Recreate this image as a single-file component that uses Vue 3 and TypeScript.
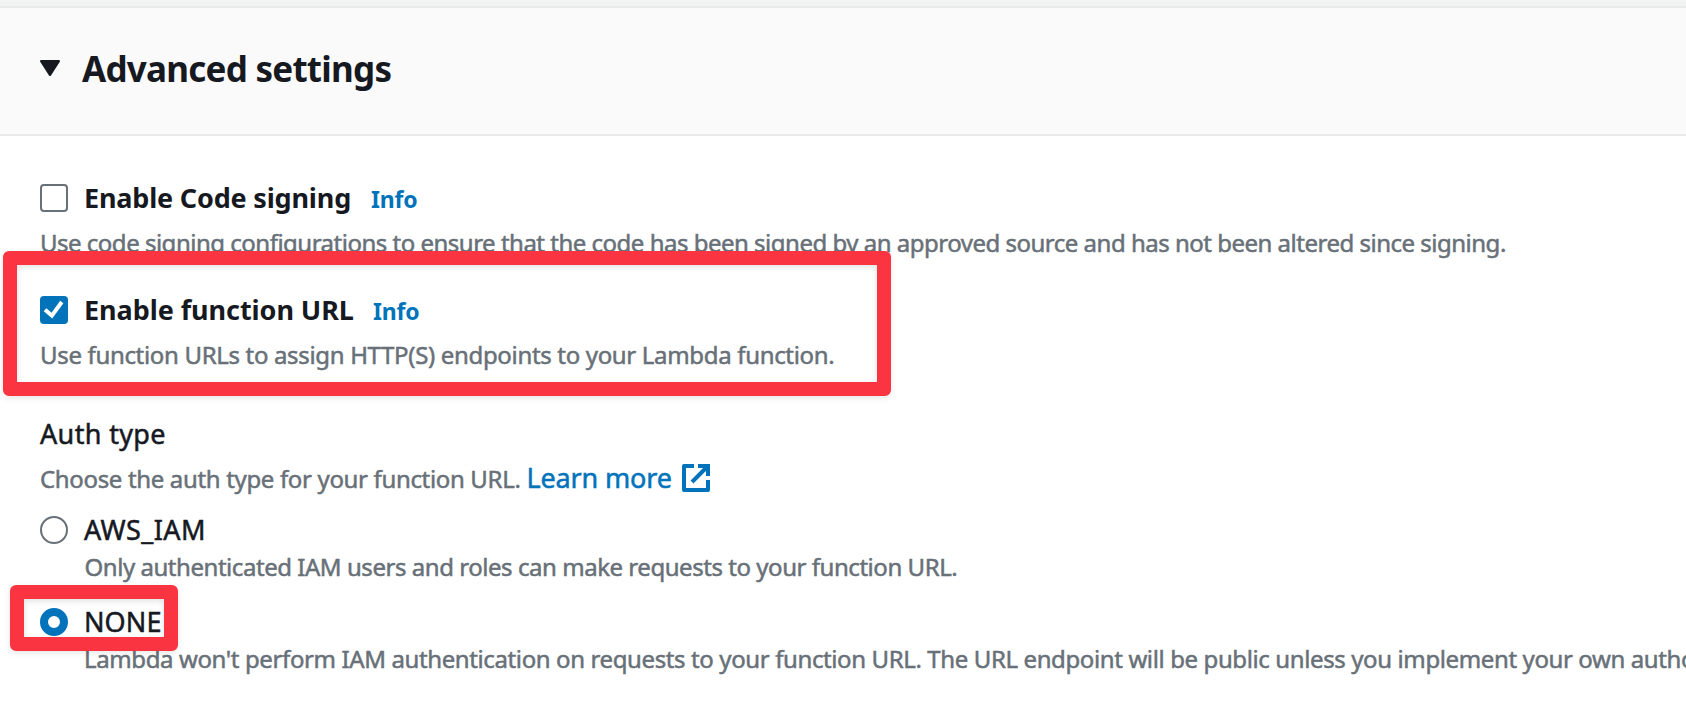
<script setup lang="ts">
import { ref } from 'vue'

type AuthType = 'AWS_IAM' | 'NONE'

const codeSigning = ref<boolean>(false)
const functionUrl = ref<boolean>(true)
const authType = ref<AuthType>('NONE')
</script>

<template>
  <main class="page">
    <div class="strip"></div>
    <header class="header">
      <svg class="caret" viewBox="0 0 20 16" width="20" height="16">
        <path d="M1.2 1.2H18.8L10 14.8Z" />
      </svg>
      <h2 class="title">Advanced settings</h2>
    </header>

    <section class="body">
      <div class="row option signing" @click="codeSigning = !codeSigning">
        <span class="box" :class="{ checked: codeSigning }"></span>
        <span class="label signing-label">Enable Code signing</span>
        <a class="info">Info</a>
      </div>
      <p class="row desc signing-desc">
        Use code signing configurations to ensure that the code has been signed by an approved source and has not been altered since signing.
      </p>

      <div class="row option url" @click="functionUrl = !functionUrl">
        <span class="box" :class="{ checked: functionUrl }">
          <svg v-if="functionUrl" viewBox="0 0 28 28" width="28" height="28">
            <path d="M5 13.8L11.9 19.6L21.8 6" />
          </svg>
        </span>
        <span class="label url-label">Enable function URL</span>
        <a class="info">Info</a>
      </div>
      <p class="row desc url-desc">Use function URLs to assign HTTP(S) endpoints to your Lambda function.</p>

      <div class="row auth">Auth type</div>
      <div class="row choose">
        <span class="desc choose-desc">Choose the auth type for your function URL.</span>
        <a class="learn">Learn more</a>
        <svg class="external" viewBox="0 0 28 28" width="28" height="28">
          <path d="M12 2H2V26H26V16" stroke-linejoin="round" />
          <path d="M16 2H26V12M10 18L25.5 2.5" />
        </svg>
      </div>

      <div class="row option iam" @click="authType = 'AWS_IAM'">
        <span class="radio" :class="{ selected: authType === 'AWS_IAM' }"></span>
        <span class="choice iam-label">AWS_IAM</span>
      </div>
      <p class="row desc iam-desc">Only authenticated IAM users and roles can make requests to your function URL.</p>

      <div class="row option none" @click="authType = 'NONE'">
        <span class="radio" :class="{ selected: authType === 'NONE' }"></span>
        <span class="choice none-label">NONE</span>
      </div>
      <p class="row desc none-desc">
        Lambda won't perform IAM authentication on requests to your function URL. The URL endpoint will be public unless you implement your own authorization logic
      </p>
    </section>

    <div class="highlight highlight-url"></div>
    <div class="highlight highlight-none"></div>
  </main>
</template>

<style>
body {
  margin: 0;
  overflow: hidden;
  background: #fff;
}
</style>

<style scoped>
.page {
  position: relative;
  width: 100%;
  height: 705px;
  overflow: hidden;
  background: #fff;
  color: #16191f;
  font-family: "Noto Sans", "Open Sans", sans-serif;
}
.strip {
  box-sizing: border-box;
  height: 8px;
  background: #f2f3f3;
  border-bottom: 2px solid #eaeaea;
}
.header {
  box-sizing: border-box;
  display: flex;
  height: 128px;
  padding: 43px 40px 0;
  background: #fafafa;
  border-bottom: 2px solid #eaeaea;
}
.caret {
  margin-top: 9px;
  fill: #16191f;
  stroke: #16191f;
  stroke-width: 2.4;
  stroke-linejoin: round;
}
.title {
  margin: 0 0 0 22px;
  font-size: 35px;
  line-height: 36px;
  font-weight: 700;
  letter-spacing: -0.75px;
}
.body {
  padding: 44px 0 0 40px;
}
.row {
  height: 36px;
  margin: 0;
  line-height: 36px;
  font-size: 27px;
  white-space: nowrap;
}
.option {
  display: flex;
  align-items: center;
}
.box,
.radio {
  box-sizing: border-box;
  flex: none;
  width: 28px;
  height: 28px;
  border: 2px solid #687078;
  background: #fff;
}
.box {
  border-radius: 4px;
}
.box.checked {
  border: 0;
  background: #0073bb;
}
.box svg {
  display: block;
  fill: none;
  stroke: #fff;
  stroke-width: 4;
}
.radio {
  border-radius: 50%;
}
.radio.selected {
  border: 8px solid #0073bb;
}
.label {
  margin-left: 16px;
  font-weight: 700;
}
.signing-label {
  width: 287px;
  letter-spacing: -0.18px;
}
.url-label {
  width: 289px;
  letter-spacing: -0.06px;
}
.info {
  padding-top: 1px;
  color: #0073bb;
  font-size: 23px;
  font-weight: 700;
  letter-spacing: -0.2px;
}
.desc {
  color: #687078;
  font-size: 24px;
  -webkit-text-stroke: 0.5px #687078;
}
.signing-desc {
  margin: 9px 0 0;
  letter-spacing: -0.497px;
}
.url {
  margin-top: 31px;
}
.url-desc {
  margin: 9px 0 0;
  letter-spacing: -0.33px;
}
.auth {
  margin-top: 43px;
  letter-spacing: 0.35px;
  -webkit-text-stroke: 0.5px #16191f;
}
.choose {
  display: flex;
  align-items: baseline;
  margin-top: 8px;
}
.choose-desc {
  width: 486.5px;
  letter-spacing: -0.34px;
}
.learn {
  width: 155.5px;
  color: #0073bb;
  letter-spacing: -0.15px;
  -webkit-text-stroke: 0.5px #0073bb;
}
.external {
  align-self: flex-start;
  margin-top: 4px;
  fill: none;
  stroke: #0073bb;
  stroke-width: 4;
}
.iam {
  margin-top: 16px;
}
.choice {
  -webkit-text-stroke: 0.5px #16191f;
}
.iam-label {
  margin-left: 16px;
  letter-spacing: 0.4px;
}
.iam-desc {
  margin: 1px 0 0 44.5px;
  letter-spacing: -0.455px;
}
.none {
  margin-top: 19px;
}
.none-label {
  margin-left: 16px;
  letter-spacing: 0.1px;
}
.none-desc {
  margin: 1px 0 0 44px;
  letter-spacing: -0.385px;
}
.highlight {
  position: absolute;
  box-sizing: border-box;
  pointer-events: none;
}
.highlight::before {
  content: "";
  position: absolute;
  inset: 0;
  border: 14px solid #fa3541;
  border-radius: 6px;
  box-shadow: 0 2px 6px rgba(0, 0, 0, 0.1), inset 0 2px 6px rgba(0, 0, 0, 0.12);
}
.highlight-url {
  left: 3px;
  top: 251px;
  width: 888px;
  height: 145px;
}
.highlight-none {
  left: 10px;
  top: 585px;
  width: 168px;
  height: 66px;
}
</style>
